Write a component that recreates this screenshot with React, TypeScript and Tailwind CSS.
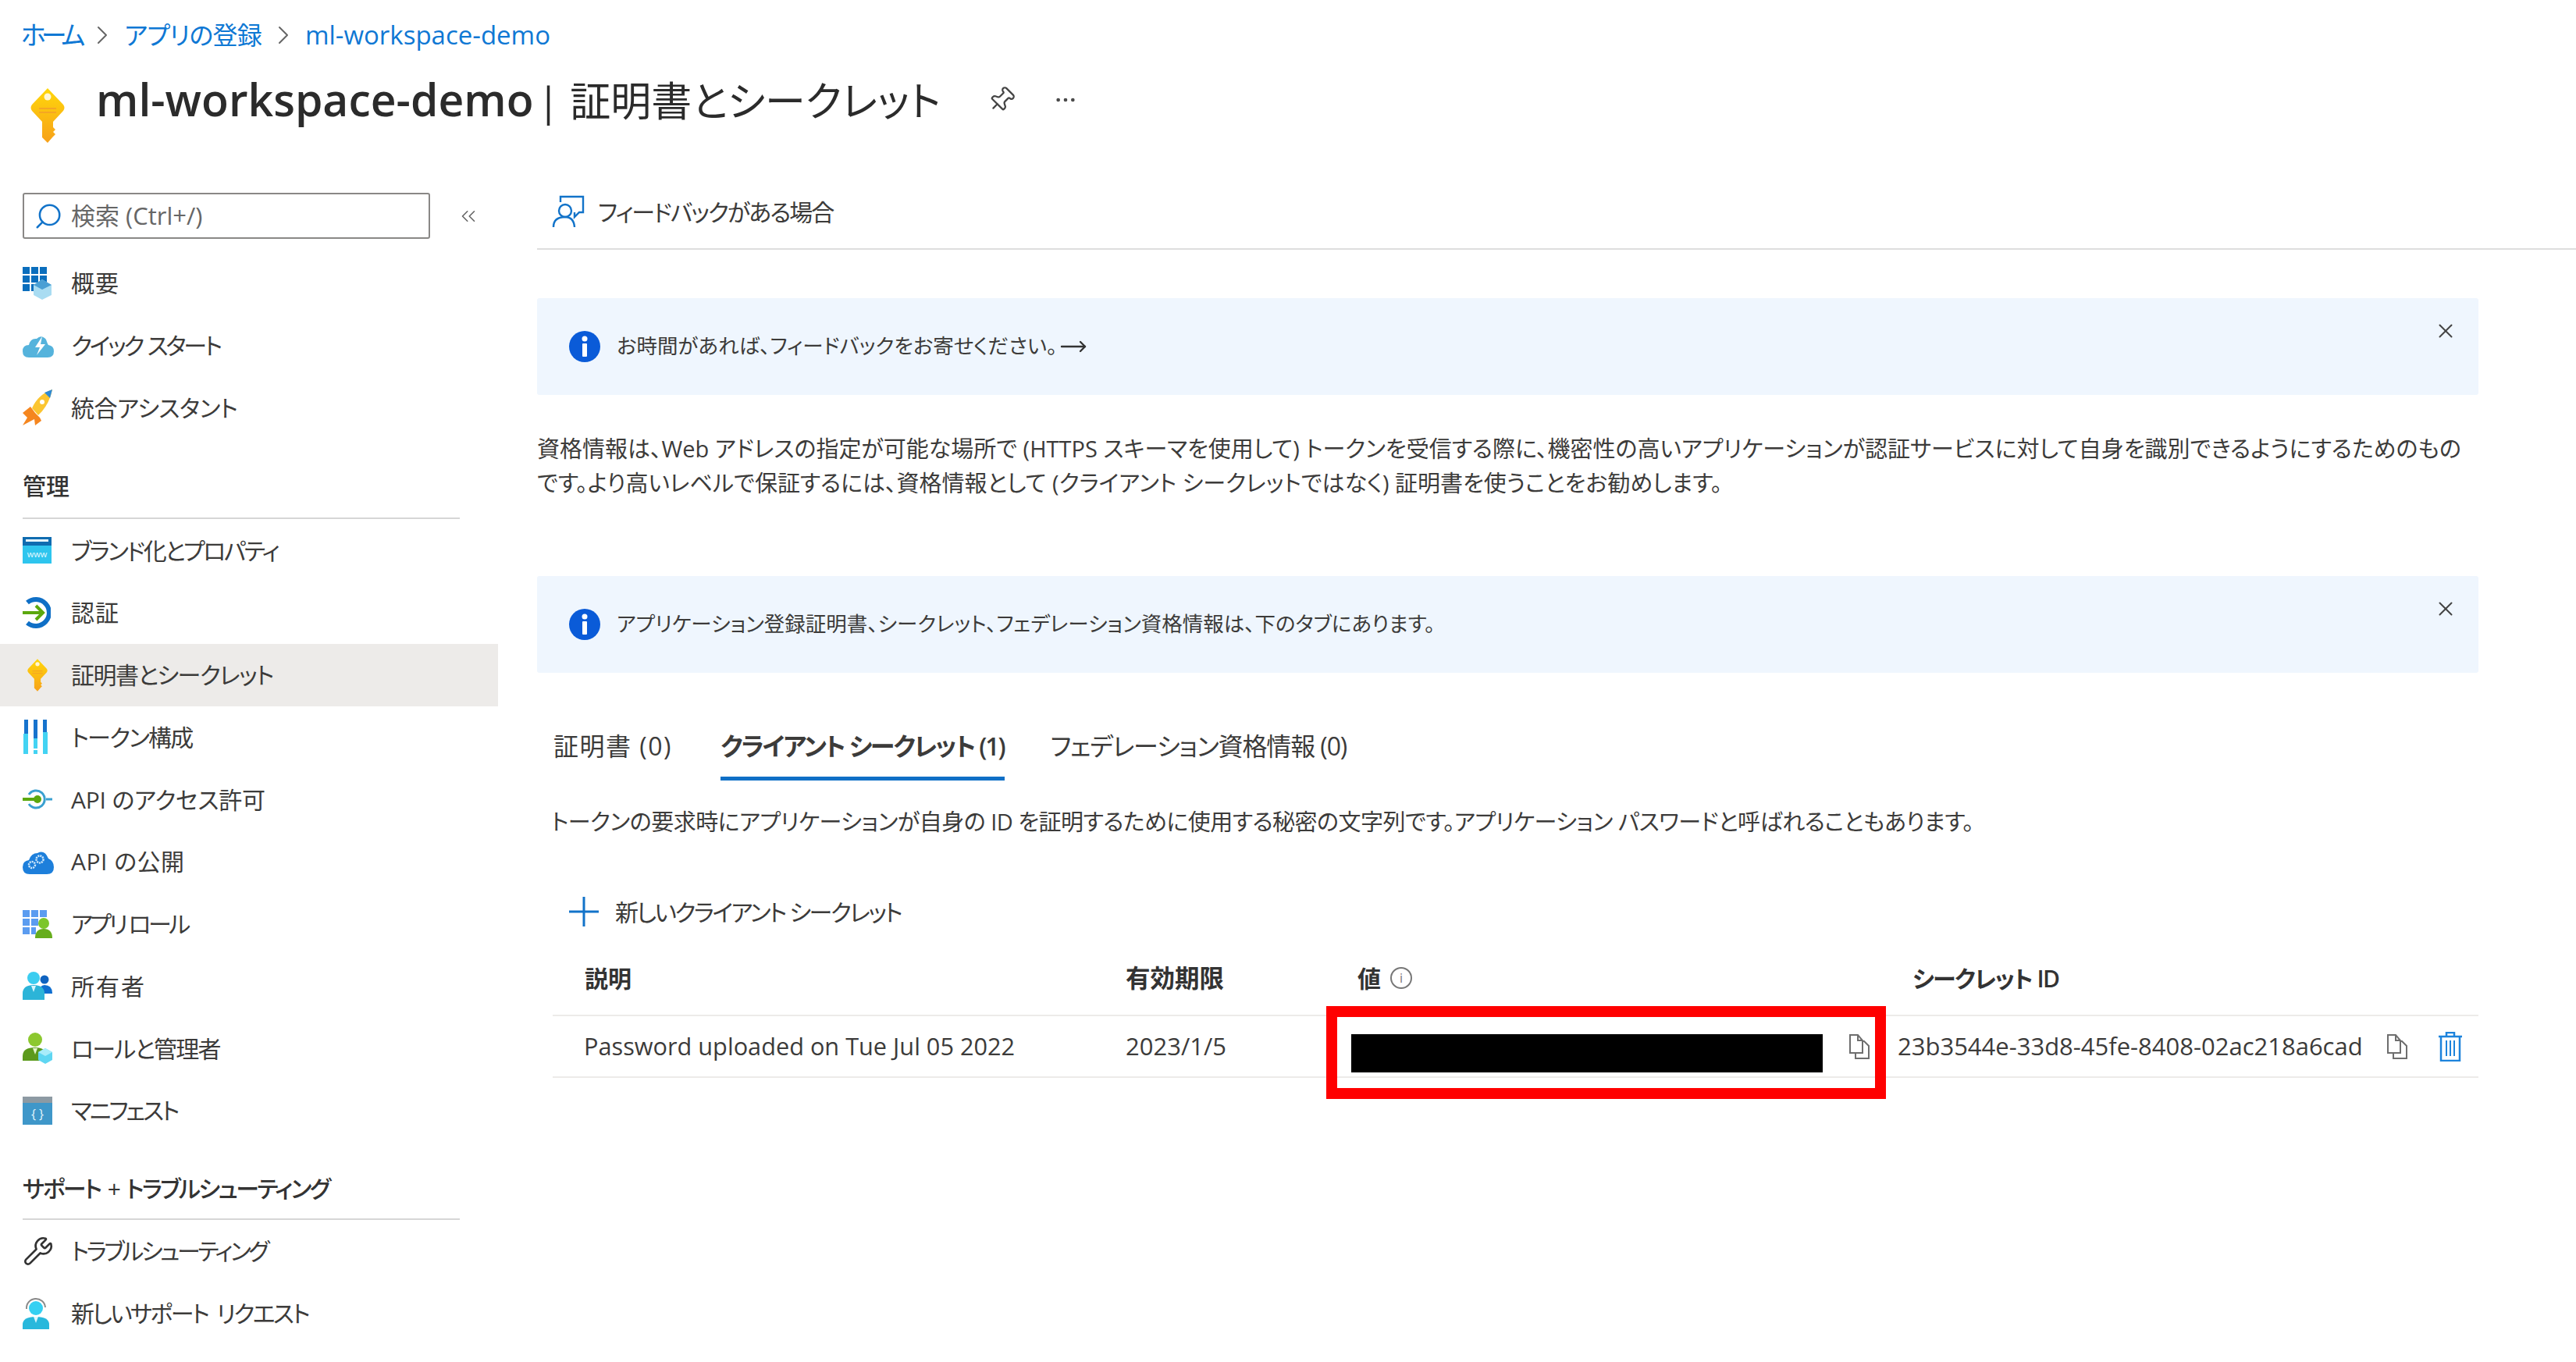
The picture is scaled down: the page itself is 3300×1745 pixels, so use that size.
import { ChevronRight, ChevronsLeft, Ellipsis, MoveRight, Pin, Search, Wrench, X } from "lucide-react";
import type { ReactNode } from "react";

const KeyIcon = ({ className, id }: { className: string; id: string }) => (
  <svg viewBox="0 0 44 70" className={className}>
    <defs>
      <linearGradient id={id} x1="0" y1="0" x2="0" y2="1">
        <stop offset="0" stopColor="#ffd70a" />
        <stop offset="1" stopColor="#f7a11a" />
      </linearGradient>
    </defs>
    <path
      d="M22 0 L42 21 Q45 25 42 29 L29 43 L29 50 L32 53 L29 56 L32 59 L29 62 L22 70 L15 63 L15 43 L2 29 Q-1 25 2 21 Z"
      fill={`url(#${id})`}
    />
    <circle cx="22" cy="11" r="4.5" fill="#fff7d6" />
    <path d="M11 26 H33 M11 31 H33" stroke="#f5a623" strokeWidth="2" />
  </svg>
);

const Overview = () => (
  <svg viewBox="0 0 37 42" className="h-[42px] w-[37px]">
    <path d="M0 0h9v9H0zM11 0h9v9h-9zM22 0h9v9h-9zM0 11h9v9H0zM11 11h9v9h-9zM22 11h9v9h-9zM0 22h9v9H0zM11 22h9v9h-9z" fill="#0a6ebd" />
    <path d="M25 16 L37 23 V36 L25 42 L14 36 V23 Z" fill="#a9dcf2" />
    <path d="M25 16 L37 23 L25 29 L14 23 Z" fill="#4a9fd4" />
  </svg>
);

const Cloud = () => (
  <svg viewBox="0 0 40 30" className="h-[30px] w-[40px]">
    <path d="M8 30 Q0 30 0 22 Q0 14 8 14 Q10 5 18 6 Q24 0 30 7 Q32 13 33 14 Q40 15 40 22 Q40 30 32 30 Z" fill="#55b3dc" />
    <path d="M25 3 L16 17 L22 17 L18 27 L29 13 L23 13 Z" fill="#fff" />
  </svg>
);

const Rocket = () => (
  <svg viewBox="0 0 38 46" className="h-[46px] w-[38px]">
    <path d="M0 30 L10 22 L16 30 L22 36 L24 40 L16 46 L15 38 L0 46 L6 36 Z" fill="#f5861f" />
    <path d="M12 24 Q20 6 38 0 Q34 20 20 33 Z" fill="#fbc531" />
    <path d="M28 4 L38 0 L35 11 Z" fill="#2d89d6" />
    <circle cx="25" cy="16" r="3" fill="#fff" />
  </svg>
);

const Branding = () => (
  <svg viewBox="0 0 37 34" className="h-[34px] w-[37px]">
    <rect width="37" height="34" fill="#2ec5ee" />
    <rect width="37" height="11" fill="#0f6cb0" />
    <rect x="4" y="3" width="29" height="3" fill="#e6f6fd" />
    <text x="18.5" y="26" textAnchor="middle" fontSize="11" fontFamily="Open Sans" fill="#e6f9ff">www</text>
  </svg>
);

const Auth = () => (
  <svg viewBox="0 0 36 42" className="h-[42px] w-[36px]">
    <path d="M6 8 A17 17 0 1 1 6 34" fill="none" stroke="#0f6fc6" strokeWidth="6" />
    <path d="M0 21 H26 M17 12 L26 21 L17 30" fill="none" stroke="#5ca80e" strokeWidth="4" />
  </svg>
);

const Token = () => (
  <svg viewBox="0 0 32 44" className="h-[44px] w-[32px]">
    <path d="M2 0h5v18H2zM14 0h5v24h-5zM26 0h5v16h-5z" fill="#1673cd" />
    <path d="M1 18h6v26H1zM14 24h5v13h-5zM14 39h5v5h-5zM26 16h6v28h-6z" fill="#43d3f3" />
  </svg>
);

const ApiAccess = () => (
  <svg viewBox="0 0 38 26" className="h-[26px] w-[38px]">
    <path d="M8 7 A11 11 0 1 1 8 19" fill="none" stroke="#3aa0d0" strokeWidth="3" />
    <path d="M30 13 H38" stroke="#3aa0d0" strokeWidth="3" />
    <path d="M0 13 H20" stroke="#5ca80e" strokeWidth="4" />
    <circle cx="19" cy="13" r="5" fill="#5ca80e" />
  </svg>
);

const ApiExpose = () => (
  <svg viewBox="0 0 40 32" className="h-[32px] w-[40px]">
    <path d="M9 32 Q0 32 0 23 Q0 15 8 14 Q11 5 19 5 Q28 0 33 12 Q40 15 40 23 Q40 32 31 32 Z" fill="#1d7fdb" />
    <circle cx="12" cy="20" r="4" fill="none" stroke="#cfe8fb" strokeWidth="2.5" strokeDasharray="2 1" />
    <circle cx="22" cy="13" r="4.5" fill="none" stroke="#cfe8fb" strokeWidth="2.5" strokeDasharray="2 1" />
  </svg>
);

const AppRole = () => (
  <svg viewBox="0 0 38 36" className="h-[36px] w-[38px]">
    <path d="M0 0h9v9H0zM11 0h9v9h-9zM22 0h9v9h-9zM0 11h9v9H0zM11 11h9v9h-9zM0 22h9v9H0zM11 22h6v9h-6z" fill="#5b9cf0" />
    <circle cx="27" cy="17" r="7" fill="#7cc62a" />
    <path d="M16 36 Q16 24 27 24 Q38 24 38 36 Z" fill="#66ad1c" />
  </svg>
);

const Owner = () => (
  <svg viewBox="0 0 38 36" className="h-[36px] w-[38px]">
    <circle cx="28" cy="10" r="5.5" fill="#0f63c0" />
    <path d="M21 28 Q21 17 28 17 Q38 17 38 28 Z" fill="#0f6fd0" />
    <circle cx="14" cy="8" r="8" fill="#3bcdf0" />
    <path d="M0 36 V28 Q0 17 14 17 Q28 17 28 28 V36 Z" fill="#2cb4d8" />
    <path d="M11 18 L14 26 L17 18 Z" fill="#d9f6fc" />
  </svg>
);

const RoleAdmin = () => (
  <svg viewBox="0 0 38 40" className="h-[40px] w-[38px]">
    <circle cx="16" cy="9" r="9" fill="#8cc82f" />
    <path d="M0 36 V30 Q0 19 16 19 Q30 19 30 30 V36 Z" fill="#5c9a1c" />
    <path d="M13 20 L16 28 L19 20 Z" fill="#e4f5c9" />
    <path d="M29 20 L38 25 V35 L29 40 L20 35 V25 Z" fill="#5fd6f2" />
    <path d="M29 20 L38 25 L29 30 L20 25 Z" fill="#a9ecfa" />
  </svg>
);

const Manifest = () => (
  <svg viewBox="0 0 38 36" className="h-[36px] w-[38px]">
    <rect width="38" height="36" fill="#3f97c9" />
    <rect width="38" height="8" fill="#8d9aa3" />
    <text x="19" y="28" textAnchor="middle" fontSize="16" fontFamily="Open Sans" fill="#e6f6fd">{"{ }"}</text>
  </svg>
);

const Support = () => (
  <svg viewBox="0 0 34 42" className="h-[42px] w-[34px]">
    <path d="M5 16 A12 12 0 0 1 29 14" fill="none" stroke="#8a8a8a" strokeWidth="2" />
    <circle cx="17" cy="15" r="9" fill="#35d0f2" />
    <path d="M0 42 V36 Q0 26 17 26 Q34 26 34 36 V42 Z" fill="#28b8dc" />
    <path d="M14 26 L17 34 L20 26 Z" fill="#dff7fd" />
  </svg>
);

const InfoCircle = () => (
  <svg viewBox="0 0 40 40" className="h-[40px] w-[40px] shrink-0">
    <circle cx="20" cy="20" r="20" fill="#0a5bd8" />
    <circle cx="20" cy="10" r="3.5" fill="#fff" />
    <rect x="17" y="16" width="6" height="17" rx="1" fill="#fff" />
  </svg>
);

const CopyIcon = () => (
  <svg viewBox="0 0 28 32" fill="none" stroke="#6e6e6e" strokeWidth="2" className="h-[32px] w-[28px]">
    <path d="M2 1 H12 L18 8 V24 H2 Z" />
    <path d="M12 1 V8 H18" />
    <path d="M18 9 H20 L26 15 V31 H9 V24" />
  </svg>
);

const TrashIcon = () => (
  <svg viewBox="0 0 32 38" fill="none" stroke="#1d83dc" strokeWidth="2.5" className="h-[38px] w-[32px]">
    <path d="M1 6 H31 M11 6 V1 H21 V6" />
    <path d="M4 6 V37 H28 V6" />
    <path d="M11 11 V31 M16 11 V31 M21 11 V31" strokeWidth="2" />
  </svg>
);

const FeedbackIcon = () => (
  <svg viewBox="0 0 42 42" fill="none" stroke="#1273c9" strokeWidth="2.4" className="h-[42px] w-[42px]">
    <path d="M11 9 V2 H40 V22 H35 L29 28 V22" />
    <circle cx="17" cy="20" r="8" />
    <path d="M2 41 Q2 28 17 28 Q28 28 29 41" />
  </svg>
);

type Item = { icon: ReactNode; label: string; fit?: string };

const firstItems: Item[] = [
  { icon: <Overview />, label: "概要", fit: "tracking-[1px]" },
  { icon: <Cloud />, label: "クイック スタート", fit: "tracking-[-3.2px] [word-spacing:2px]" },
  { icon: <Rocket />, label: "統合アシスタント", fit: "tracking-[-0.5px]" },
];

const manageItems: Item[] = [
  { icon: <Branding />, label: "ブランド化とプロパティ", fit: "tracking-[-2.5px]" },
  { icon: <Auth />, label: "認証", fit: "tracking-[1px]" },
  { icon: <KeyIcon className="ml-[6px] h-[44px] w-[26px]" id="keySmall" />, label: "証明書とシークレット", fit: "tracking-[-1.5px]" },
  { icon: <Token />, label: "トークン構成", fit: "tracking-[-1.8px]" },
  { icon: <ApiAccess />, label: "API のアクセス許可", fit: "tracking-[-0.2px]" },
  { icon: <ApiExpose />, label: "API の公開", fit: "tracking-[0.5px]" },
  { icon: <AppRole />, label: "アプリ ロール", fit: "tracking-[-3.6px]" },
  { icon: <Owner />, label: "所有者", fit: "tracking-[2px]" },
  { icon: <RoleAdmin />, label: "ロールと管理者", fit: "tracking-[-1.8px]" },
  { icon: <Manifest />, label: "マニフェスト", fit: "tracking-[-3px]" },
];

const supportItems: Item[] = [
  { icon: <Wrench className="h-[40px] w-[40px] text-[#333]" strokeWidth={1.6} />, label: "トラブルシューティング", fit: "tracking-[-3.4px]" },
  { icon: <Support />, label: "新しいサポート リクエスト", fit: "tracking-[-2.6px] [word-spacing:6px]" },
];

const NavRow = ({ item }: { item: Item }) => (
  <div className={"flex h-[79.75px] items-center " + (item.label === "証明書とシークレット" ? "bg-[#edebe9]" : "")}>
    <div className="ml-[29px] flex w-[62px] shrink-0 items-center">{item.icon}</div>
    <span className={item.fit}>{item.label}</span>
  </div>
);

const Banner = ({ text, extra }: { text: string; extra?: ReactNode }) => (
  <div className="relative flex h-[124px] w-[2487px] items-center rounded-[3px] bg-[#eff6fe] pl-[41px] text-[26.5px]">
    <InfoCircle />
    <span className="ml-[21px]">{text}</span>
    {extra}
    <X className="absolute right-[27px] top-[27px] h-[30px] w-[30px] text-[#444]" strokeWidth={1.6} />
  </div>
);

export default function App() {
  return (
    <div className="h-[1745px] w-[3300px] overflow-hidden bg-white font-['Open_Sans','Noto_Sans_CJK_JP',sans-serif] text-[30px] text-[#3c3b3a] [font-feature-settings:'palt']">
      <header className="h-[214px]">
        <div className="flex h-[90px] items-center pl-[27px] text-[33px] text-[#0f78d4]">
          <span className="tracking-[-6px]">ホーム</span>
          <ChevronRight className="mx-[8px] h-[40px] w-[40px] text-[#666]" strokeWidth={1.2} />
          <span className="text-[32px] tracking-[-0.8px]">アプリの登録</span>
          <ChevronRight className="mx-[8px] h-[40px] w-[40px] text-[#666]" strokeWidth={1.2} />
          <span>ml-workspace-demo</span>
        </div>
        <div className="-mt-[18px] flex items-center">
          <KeyIcon className="ml-[39px] mt-[41px] h-[70px] w-[44px]" id="keyLarge" />
          <h1 className="ml-[40px] text-[57px] font-semibold text-[#2b2b2b]">
            ml-workspace-demo <span className="-ml-[10px] text-[52px] font-normal">| 証明書とシークレット</span>
          </h1>
          <Pin className="ml-[60px] h-[36px] w-[36px] rotate-45 text-[#444]" strokeWidth={1.5} />
          <Ellipsis className="ml-[48px] h-[32px] w-[32px] text-[#444]" strokeWidth={1.5} />
        </div>
      </header>

      <div className="flex">
        <aside className="w-[638px] shrink-0 pt-[33px]">
          <div className="flex items-center pb-[17px]">
            <div className="ml-[29px] flex h-[59px] w-[522px] items-center rounded-[3px] border-2 border-[#8a8886] pl-[12px] text-[31px] text-[#666]">
              <Search className="h-[38px] w-[38px] -scale-x-100 text-[#1273c9]" strokeWidth={1.6} />
              <span className="ml-[10px]">検索 (Ctrl+/)</span>
            </div>
            <ChevronsLeft className="ml-[34px] h-[30px] w-[30px] text-[#666]" strokeWidth={1.3} />
          </div>
          {firstItems.map((item) => (
            <NavRow key={item.label} item={item} />
          ))}
          <div className="mx-[29px] flex h-[103px] w-[560px] items-end border-b-2 border-[#d6d6d6] pb-[18px] font-medium text-[#333]">
            管理
          </div>
          {manageItems.map((item) => (
            <NavRow key={item.label} item={item} />
          ))}
          <div className="mx-[29px] flex h-[100px] w-[560px] items-end border-b-2 border-[#d6d6d6] pb-[16px] font-medium tracking-[-2.6px] text-[#333] [word-spacing:4px]">
            サポート + トラブルシューティング
          </div>
          {supportItems.map((item) => (
            <NavRow key={item.label} item={item} />
          ))}
        </aside>

        <main className="ml-[50px] flex-1">
          <div className="flex h-[106px] items-center border-b-2 border-[#dedede] pl-[19px] pt-[10px]">
            <FeedbackIcon />
            <span className="ml-[17px] tracking-[-2px]">フィードバックがある場合</span>
          </div>

          <div className="mt-[62px]">
            <Banner
              text="お時間があれば、フィードバックをお寄せください。"
              extra={<MoveRight className="ml-[3px] h-[36px] w-[36px] text-[#333]" strokeWidth={1.6} />}
            />
          </div>

          <p className="mt-[47px] text-[29px] leading-[44px]">
            資格情報は、Web アドレスの指定が可能な場所で (HTTPS スキーマを使用して) トークンを受信する際に、機密性の高いアプリケーションが認証サービスに対して自身を識別できるようにするためのもの
            <br />
            です。より高いレベルで保証するには、資格情報として (クライアント シークレットではなく) 証明書を使うことをお勧めします。
          </p>

          <div className="mt-[97px]">
            <Banner text="アプリケーション登録証明書、シークレット、フェデレーション資格情報は、下のタブにあります。" />
          </div>

          <div className="ml-[21px] mt-[70px] flex h-[68px] text-[32px]">
            <div className="flex w-[214px] items-start tracking-[1.5px]">証明書 (0)</div>
            <div className="mr-[59px] flex items-start border-b-[5px] border-[#0f6fc6] font-semibold tracking-[-2.1px]">クライアント シークレット (1)</div>
            <div className="flex items-start tracking-[-1.1px]">フェデレーション資格情報 (0)</div>
          </div>

          <p className="ml-[18px] mt-[30px] text-[29px] leading-[45px] tracking-[-0.5px]">
            トークンの要求時にアプリケーションが自身の ID を証明するために使用する秘密の文字列です。アプリケーション パスワードと呼ばれることもあります。
          </p>

          <div className="ml-[41px] mt-[68px] flex h-[50px] items-center">
            <svg viewBox="0 0 38 38" stroke="#1273c9" strokeWidth="3" className="h-[38px] w-[38px]">
              <path d="M19 0 V38 M0 19 H38" />
            </svg>
            <span className="ml-[21px] tracking-[-2.4px]">新しいクライアント シークレット</span>
          </div>

          <div className="relative ml-[20px] w-[2467px] text-[31px]">
            <div className="grid h-[109px] grid-cols-[734px_297px_711px_1fr] items-center border-b-2 border-[#edebe9] pt-[13px] font-semibold text-[#333]">
              <div className="pl-[41px] text-[30px]">説明</div>
              <div className="text-[31.5px]">有効期限</div>
              <div className="flex items-center text-[30px]">
                値
                <span className="ml-[12px] flex h-[28px] w-[28px] items-center justify-center rounded-full border-2 border-[#777] text-[16px] font-normal text-[#777]">i</span>
              </div>
              <div className="text-[30px] tracking-[-1.5px]">シークレット ID</div>
            </div>
            <div className="grid h-[79px] grid-cols-[734px_289px_700px_1fr] items-center border-b-2 border-[#edebe9]">
              <div className="pl-[40px] text-[30.7px]">Password uploaded on Tue Jul 05 2022</div>
              <div>2023/1/5</div>
              <div className="flex items-center">
                <div className="mt-[18px] h-[49px] w-[604px] bg-black" />
                <div className="ml-[33px]"><CopyIcon /></div>
              </div>
              <div className="flex items-center">
                <span>23b3544e-33d8-45fe-8408-02ac218a6cad</span>
                <div className="ml-[30px]"><CopyIcon /></div>
                <div className="ml-[38px]"><TrashIcon /></div>
              </div>
            </div>
            <div className="absolute left-[991px] top-[96px] h-[119px] w-[717px] border-[14px] border-[#ff0000]" />
          </div>
        </main>
      </div>
    </div>
  );
}
